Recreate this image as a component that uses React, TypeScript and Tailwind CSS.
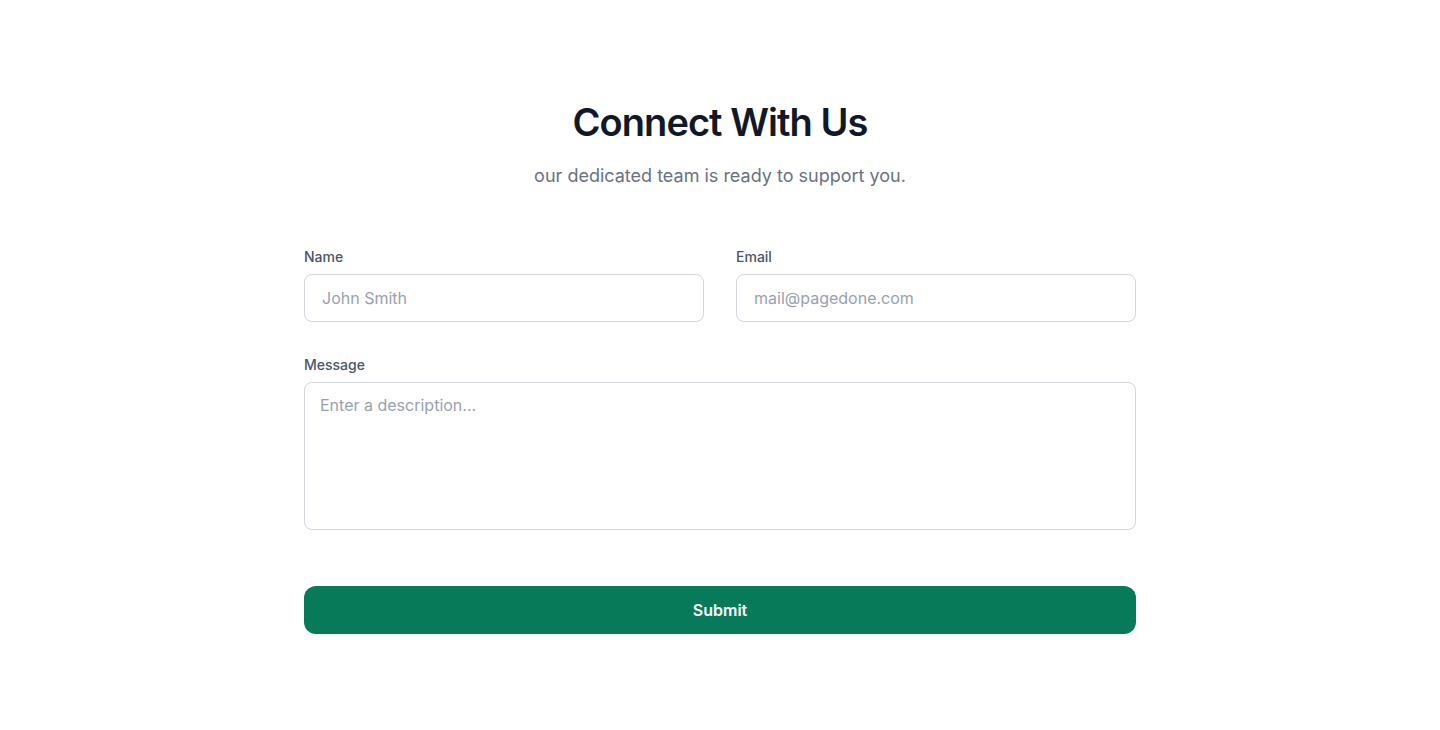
import React, { useState } from 'react';

const App: React.FC = () => {
  const [name, setName] = useState('');
  const [email, setEmail] = useState('');
  const [message, setMessage] = useState('');

  return (
    <div className="min-h-screen bg-white font-['Inter',sans-serif]">
      <section className="mx-auto w-[832px] pt-[98px]">
        <h2 className="text-center text-[38px] leading-[48px] font-semibold tracking-[-0.025em] text-[#111827] font-['Inter',sans-serif]">
          Connect With Us
        </h2>
        <p className="mt-4 text-center text-lg leading-7 text-gray-500">
          our dedicated team is ready to support you.
        </p>

        <form className="mt-[57px]">
          <div className="grid grid-cols-2 gap-8">
            <div>
              <label className="mb-[7px] block text-sm leading-5 font-medium text-gray-600">Name</label>
              <input
                type="text"
                value={name}
                onChange={e => setName(e.target.value)}
                placeholder="John Smith"
                className="block h-12 w-full rounded-lg border border-gray-300 px-[17px] text-base text-gray-900 placeholder-gray-400 outline-none"
              />
            </div>
            <div>
              <label className="mb-[7px] block text-sm leading-5 font-medium text-gray-600">Email</label>
              <input
                type="email"
                value={email}
                onChange={e => setEmail(e.target.value)}
                placeholder="mail@pagedone.com"
                className="block h-12 w-full rounded-lg border border-gray-300 px-[17px] text-base text-gray-900 placeholder-gray-400 outline-none"
              />
            </div>
          </div>

          <div className="mt-[33px]">
            <label className="mb-[7px] block text-sm leading-5 font-medium text-gray-600">Message</label>
            <textarea
              value={message}
              onChange={e => setMessage(e.target.value)}
              placeholder="Enter a description..."
              className="block h-[148px] w-full resize-none rounded-lg border border-gray-300 px-[15px] py-[10px] text-base leading-6 text-gray-900 placeholder-gray-400 outline-none"
            />
          </div>

          <button
            type="button"
            className="mt-14 h-12 w-full rounded-xl bg-[#077a59] text-base font-semibold text-white"
          >
            Submit
          </button>
        </form>
      </section>
    </div>
  );
};

export default App;
